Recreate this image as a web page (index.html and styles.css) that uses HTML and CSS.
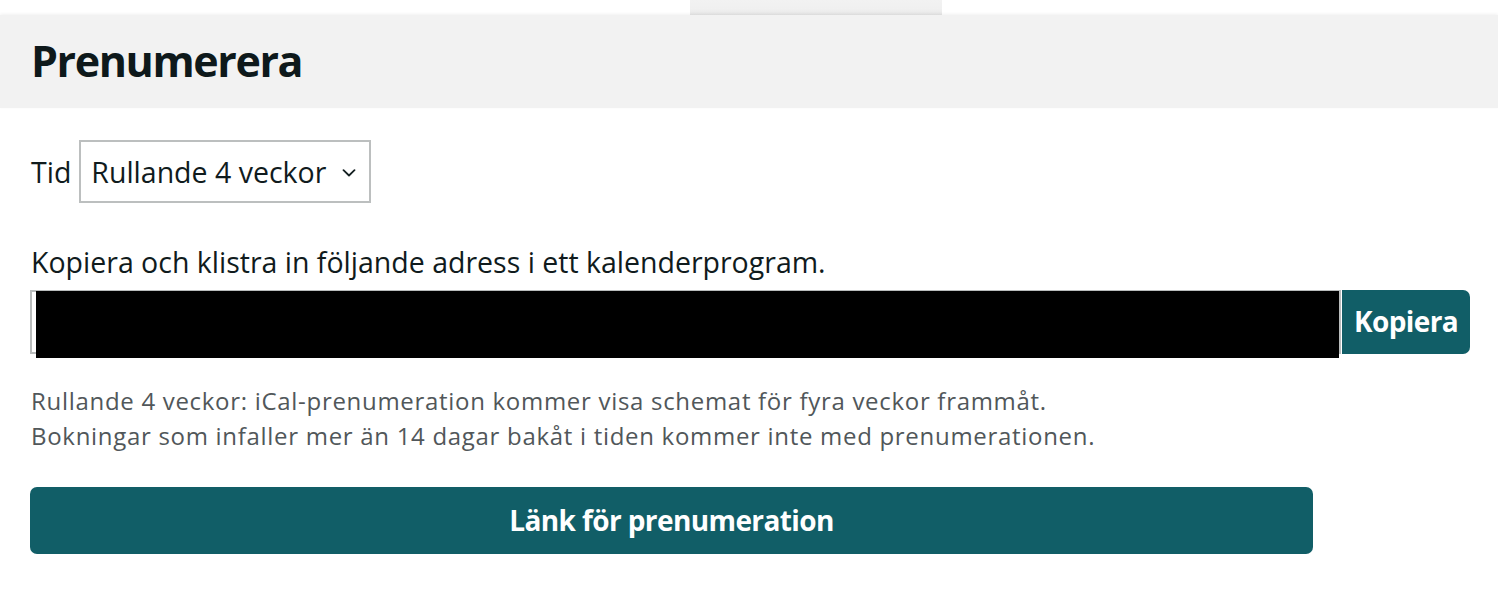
FILE: index.html
```html
<!DOCTYPE html>
<html lang="sv">
<head>
<meta charset="utf-8">
<title>Prenumerera</title>
<link rel="stylesheet" href="styles.css">
</head>
<body>
<div class="tabs"><div class="tab"></div></div>
<header class="header">
  <h1 class="title">Prenumerera</h1>
</header>
<main class="content">
  <div class="field-row">
    <label class="field-label" for="tid">Tid</label>
    <div class="select">
      <span class="select-value">Rullande 4 veckor</span>
      <svg class="chevron" width="14" height="8" viewBox="0 0 14 8" aria-hidden="true"><path d="M1.5 1.2 L7 6.5 L12.5 1.2" fill="none" stroke="#152022" stroke-width="1.8" stroke-linecap="round" stroke-linejoin="round"/></svg>
    </div>
  </div>
  <p class="instruction">Kopiera och klistra in följande adress i ett kalenderprogram.</p>
  <div class="copy-row">
    <div class="url-field">
      <div class="redacted"></div>
    </div>
    <button class="copy-btn">Kopiera</button>
  </div>
  <p class="description">Rullande 4 veckor: iCal-prenumeration kommer visa schemat för fyra veckor frammåt.<br>Bokningar som infaller mer än 14 dagar bakåt i tiden kommer inte med prenumerationen.</p>
  <button class="primary-btn">Länk för prenumeration</button>
</main>
</body>
</html>
```
FILE: styles.css
```css
* { box-sizing: border-box; }
html, body { margin: 0; padding: 0; background: #fff; }
body {
  font-family: "Open Sans", "Noto Sans", sans-serif;
  color: #101b1d;
}
.tabs {
  height: 15px;
  display: flex;
}
.tab {
  margin-left: 690px;
  width: 252px;
  background: linear-gradient(#f2f2f2 0, #f0f0f0 60%, #e6e6e6 100%);
}
.header {
  background: #f2f2f2;
  height: 93px;
  padding: 21px 0 0 31px;
  box-shadow: 0 -1px 3px rgba(0,0,0,0.06);
  position: relative;
}
.title {
  margin: 0;
  font-size: 43px;
  line-height: 50px;
  font-weight: 700;
  letter-spacing: -1.4px;
  color: #0e191b;
}
.content {
  padding: 32px 0 0 30px;
}
.field-row {
  display: flex;
  align-items: center;
  gap: 8px;
  padding-left: 1px;
}
.field-label {
  font-size: 28.5px;
  line-height: 38px;
}
.select {
  width: 292px;
  height: 63px;
  border: 2px solid #bcbfbf;
  display: flex;
  align-items: center;
  justify-content: space-between;
  padding: 0 13px 0 10px;
  background: #fff;
}
.select-value {
  font-size: 28.5px;
  line-height: 38px;
}
.chevron { display: block; margin-top: 2px; }
.instruction {
  margin: 40px 0 0 1px;
  font-size: 28.5px;
  line-height: 38px;
}
.copy-row {
  display: flex;
  margin-top: 9px;
  gap: 1px;
}
.url-field {
  width: 1311px;
  height: 64px;
  border: 2px solid #b9bcbc;
  position: relative;
  background: #fff;
}
.redacted {
  position: absolute;
  left: 4px;
  top: -1px;
  width: 1303px;
  height: 67px;
  background: #000;
}
.copy-btn {
  width: 128px;
  height: 64px;
  border: 0;
  border-radius: 0 7px 7px 0;
  background: #115e67;
  color: #fff;
  font-family: inherit;
  font-size: 28px;
  font-weight: 700;
  letter-spacing: -0.6px;
  padding: 0 0 2px 0;
}
.description {
  margin: 29px 0 0 1px;
  font-size: 24px;
  line-height: 35px;
  letter-spacing: 0.7px;
  color: #51575a;
}
.primary-btn {
  display: block;
  margin-top: 34px;
  width: 1283px;
  height: 67px;
  border: 0;
  border-radius: 7px;
  background: #115e67;
  color: #fff;
  font-family: inherit;
  font-size: 28px;
  font-weight: 700;
  letter-spacing: -0.6px;
  padding: 0 0 2px 0;
}
```
